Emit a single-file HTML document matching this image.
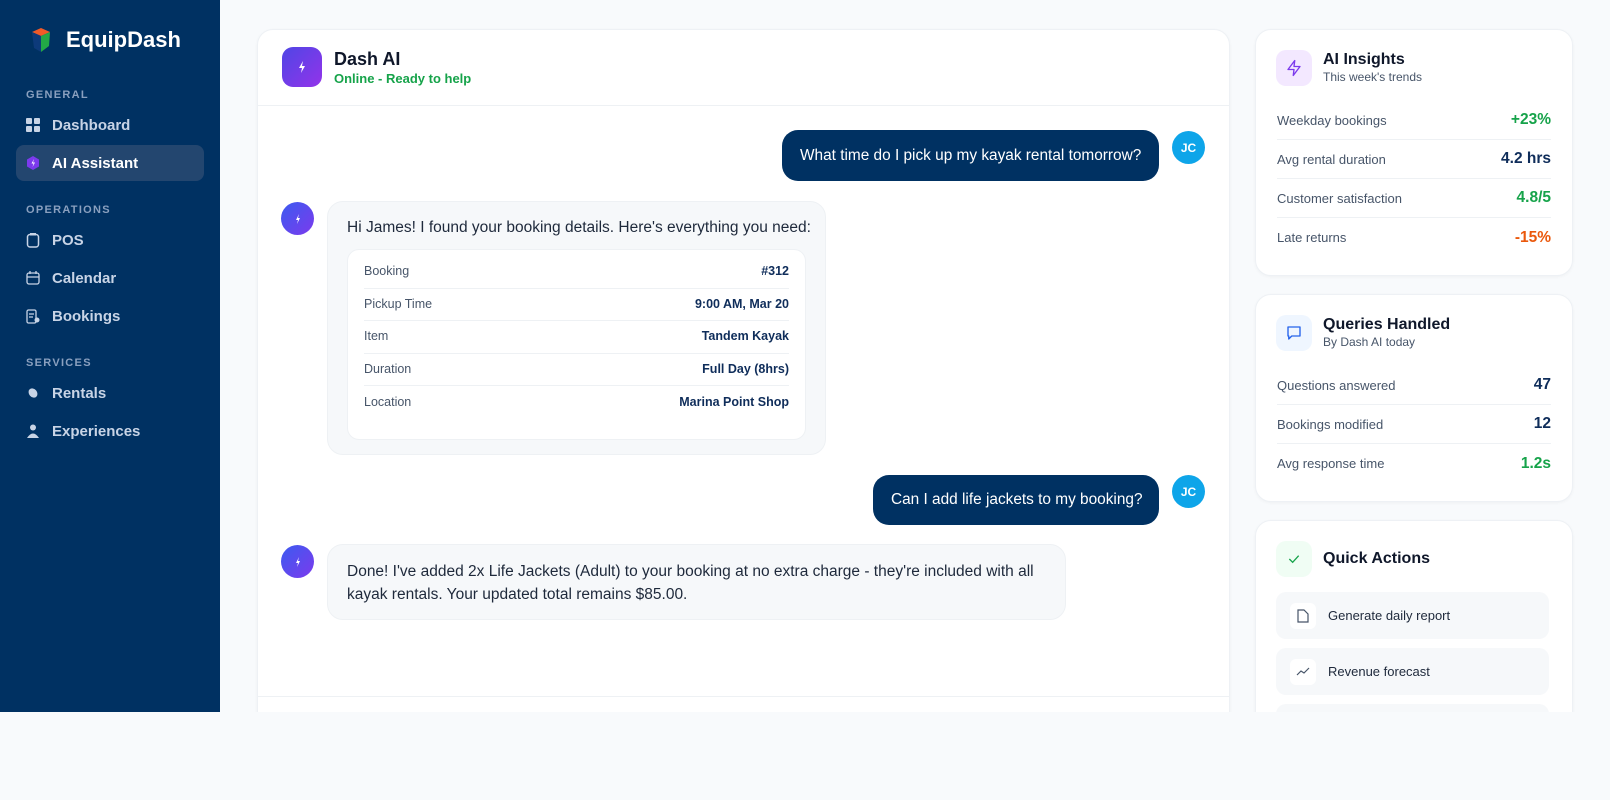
<!DOCTYPE html>
<html><head><meta charset="utf-8"><style>
*{box-sizing:border-box;margin:0;padding:0}
body{width:1610px;height:800px;background:#f8fafc;font-family:"Liberation Sans",sans-serif;position:relative;overflow:hidden;color:#0f172a}
.side{position:absolute;left:0;top:0;width:220px;height:712px;background:#003162}
.logo{position:absolute;left:30px;top:26px;display:flex;align-items:center;gap:14px;color:#fff;font-weight:700;font-size:22px}
.sec{position:absolute;left:26px;font-size:11px;letter-spacing:1.3px;color:#8aa0bf;font-weight:700}
.nav{position:absolute;left:16px;width:188px;height:36px;display:flex;align-items:center;padding-left:10px;gap:12px;color:#c8d4e6;font-size:15px;font-weight:600}
.nav.act{background:#23466f;color:#fff;border-radius:8px}
.ic{width:14px;height:14px;display:flex;align-items:center;justify-content:center}
.card{position:absolute;background:#fff;border-radius:16px;box-shadow:0 1px 3px rgba(0,0,0,.04);border:1px solid #eef1f5}
.av{position:absolute;border-radius:50%;background:linear-gradient(135deg,#3b5bf0,#7c3aed);display:flex;align-items:center;justify-content:center}
.jc{position:absolute;width:33px;height:33px;border-radius:50%;background:#0ea5e9;color:#fff;font-size:12px;font-weight:700;display:flex;align-items:center;justify-content:center}
.ub{position:absolute;background:#003162;color:#fff;font-size:15.4px;border-radius:16px;display:flex;align-items:center;padding:0 18px;white-space:nowrap}
.bb{position:absolute;background:#f6f8fa;border:1px solid #eef1f4;border-radius:16px;font-size:15.5px;color:#1e293b;line-height:23px}
.row{display:flex;justify-content:space-between;align-items:center;height:32.5px;border-bottom:1px solid #eef1f4;font-size:12.5px}
.row span:first-child{color:#475569}
.row span:last-child{color:#0f2d5a;font-weight:700}
.ins{display:flex;justify-content:space-between;align-items:center;height:39px;border-bottom:1px solid #eef1f4;font-size:13px;color:#475569}
.ins b{font-size:15.5px}
.hi{position:absolute;left:20px;width:36px;height:36px;border-radius:10px;display:flex;align-items:center;justify-content:center}
.ht{position:absolute;left:67px;font-weight:700;font-size:16px;color:#0f172a}
.hs{position:absolute;left:67px;font-size:12px;color:#475569}
.qa{position:absolute;left:20px;width:273px;height:47px;background:#f6f8fa;border-radius:10px;display:flex;align-items:center;padding-left:14px;gap:12px;font-size:13px;color:#1e293b}
.qa i{width:26px;height:26px;background:#fff;border-radius:6px;display:flex;align-items:center;justify-content:center}
</style></head><body>
<div class="side">
 <div class="logo"><svg width="22" height="28" viewBox="0 0 22 28"><path d="M2 6 L11 2 L20 6 L11 10Z" fill="#f05a28"/><path d="M2 6 L11 10 L11 26 L4 22Z" fill="#0d3a7a"/><path d="M11 10 L20 6 L19 20 L11 26Z" fill="#22a846"/></svg>EquipDash</div>
 <div class="sec" style="top:89px">GENERAL</div>
 <div class="nav" style="top:107px"><span class="ic"><svg width="14" height="14"><rect x="0" y="0" width="6" height="6" rx="1" fill="#c8d4e6"/><rect x="8" y="0" width="6" height="6" rx="1" fill="#c8d4e6"/><rect x="0" y="8" width="6" height="6" rx="1" fill="#c8d4e6"/><rect x="8" y="8" width="6" height="6" rx="1" fill="#c8d4e6"/></svg></span>Dashboard</div>
 <div class="nav act" style="top:145px"><span class="ic"><svg width="12" height="14"><path d="M6 0 L12 3.5 V10.5 L6 14 L0 10.5 V3.5Z" fill="#7c3aed"/><path d="M7 3 L4.5 7.5 H6.5 L5.5 11 L8 6.5 H6Z" fill="#fff"/></svg></span>AI Assistant</div>
 <div class="sec" style="top:204px">OPERATIONS</div>
 <div class="nav" style="top:222px"><span class="ic"><svg width="14" height="15"><rect x="1.5" y="1.5" width="11" height="12.5" rx="2.5" fill="none" stroke="#c8d4e6" stroke-width="1.5"/><rect x="4" y="0" width="6" height="2.5" fill="#c8d4e6"/></svg></span>POS</div>
 <div class="nav" style="top:260px"><span class="ic"><svg width="14" height="14"><rect x="1" y="2" width="12" height="11" rx="2" fill="none" stroke="#c8d4e6" stroke-width="1.3"/><path d="M1 6 H13 M4 0 V3 M10 0 V3" stroke="#c8d4e6" stroke-width="1.3"/></svg></span>Calendar</div>
 <div class="nav" style="top:298px"><span class="ic"><svg width="14" height="15"><rect x="1" y="1" width="9" height="13" rx="1.5" fill="none" stroke="#c8d4e6" stroke-width="1.3"/><path d="M3 5 H8 M3 8 H7" stroke="#c8d4e6" stroke-width="1.2"/><circle cx="11" cy="11" r="2.5" fill="#c8d4e6"/></svg></span>Bookings</div>
 <div class="sec" style="top:357px">SERVICES</div>
 <div class="nav" style="top:375px"><span class="ic"><svg width="14" height="14"><ellipse cx="7" cy="7" rx="4" ry="5" transform="rotate(-40 7 7)" fill="#c8d4e6"/></svg></span>Rentals</div>
 <div class="nav" style="top:413px"><span class="ic"><svg width="14" height="14"><circle cx="7" cy="3.5" r="3" fill="#c8d4e6"/><path d="M1 14 Q7 5 13 14Z" fill="#c8d4e6"/></svg></span>Experiences</div>
</div>

<div class="card" style="left:257px;top:29px;width:973px;height:700px;border-radius:16px">
 <div style="position:absolute;left:0;right:0;top:75px;border-top:1px solid #eef1f4"></div>
 <div style="position:absolute;left:0;right:0;top:666px;border-top:1px solid #eef1f4"></div>
 <div style="position:absolute;left:24px;top:17px;width:40px;height:40px;border-radius:11px;background:linear-gradient(135deg,#4f46e5,#9333ea);display:flex;align-items:center;justify-content:center"><svg width="8" height="12"><path d="M5 0 L1 7 H4 L3 12 L7 5 H4Z" fill="#fff"/></svg></div>
 <div style="position:absolute;left:76px;top:19px;font-size:18px;font-weight:700">Dash AI</div>
 <div style="position:absolute;left:76px;top:41px;font-size:13px;color:#16a34a;font-weight:600">Online - Ready to help</div>
</div>

<div class="ub" style="left:782px;top:130px;width:377px;height:51px">What time do I pick up my kayak rental tomorrow?</div>
<div class="jc" style="left:1172px;top:131px">JC</div>

<div class="av" style="left:281px;top:202px;width:33px;height:33px"><svg width="6" height="10"><path d="M4 0 L1 6 H3 L2 10 L5 4 H3Z" fill="#fff"/></svg></div>
<div class="bb" style="left:327px;top:201px;width:499px;height:254px;padding:14px 19px"><div style="white-space:nowrap">Hi James! I found your booking details. Here's everything you need:</div>
 <div style="margin-top:10px;background:#fff;border:1px solid #eef1f4;border-radius:12px;padding:6px 16px 10px;height:191px">
  <div class="row"><span>Booking</span><span>#312</span></div>
  <div class="row"><span>Pickup Time</span><span>9:00 AM, Mar 20</span></div>
  <div class="row"><span>Item</span><span>Tandem Kayak</span></div>
  <div class="row"><span>Duration</span><span>Full Day (8hrs)</span></div>
  <div class="row" style="border:none"><span>Location</span><span>Marina Point Shop</span></div>
 </div>
</div>

<div class="ub" style="left:873px;top:475px;width:286px;height:50px">Can I add life jackets to my booking?</div>
<div class="jc" style="left:1172px;top:475px">JC</div>

<div class="av" style="left:281px;top:545px;width:33px;height:33px"><svg width="6" height="10"><path d="M4 0 L1 6 H3 L2 10 L5 4 H3Z" fill="#fff"/></svg></div>
<div class="bb" style="left:327px;top:544px;width:739px;height:76px;padding:15px 19px">Done! I've added 2x Life Jackets (Adult) to your booking at no extra charge - they're included with all<br>kayak rentals. Your updated total remains $85.00.</div>

<div class="card" style="left:1255px;top:29px;width:318px;height:247px">
 <div class="hi" style="top:20px;background:#f3e8ff"><svg width="18" height="18" viewBox="0 0 24 24"><path d="M13 2 L4 14 H12 L11 22 L20 10 H12Z" fill="none" stroke="#7c3aed" stroke-width="1.8" stroke-linejoin="round"/></svg></div>
 <div class="ht" style="top:21px">AI Insights</div>
 <div class="hs" style="top:40px">This week's trends</div>
 <div style="position:absolute;left:21px;right:21px;top:71px">
  <div class="ins"><span>Weekday bookings</span><b style="color:#16a34a">+23%</b></div>
  <div class="ins"><span>Avg rental duration</span><b style="color:#0f2d5a">4.2 hrs</b></div>
  <div class="ins"><span>Customer satisfaction</span><b style="color:#16a34a">4.8/5</b></div>
  <div class="ins" style="border:none"><span>Late returns</span><b style="color:#ea580c">-15%</b></div>
 </div>
</div>

<div class="card" style="left:1255px;top:294px;width:318px;height:208px">
 <div class="hi" style="top:20px;background:#eff6ff"><svg width="18" height="18" viewBox="0 0 24 24"><path d="M4 4 H20 V16 H9 L5 20 V16 H4Z" fill="none" stroke="#2563eb" stroke-width="1.8" stroke-linejoin="round"/></svg></div>
 <div class="ht" style="top:21px">Queries Handled</div>
 <div class="hs" style="top:40px">By Dash AI today</div>
 <div style="position:absolute;left:21px;right:21px;top:71px">
  <div class="ins"><span>Questions answered</span><b style="color:#0f2d5a">47</b></div>
  <div class="ins"><span>Bookings modified</span><b style="color:#0f2d5a">12</b></div>
  <div class="ins" style="border:none"><span>Avg response time</span><b style="color:#16a34a">1.2s</b></div>
 </div>
</div>

<div class="card" style="left:1255px;top:520px;width:318px;height:260px">
 <div class="hi" style="top:20px;background:#f0fdf4"><svg width="16" height="16" viewBox="0 0 24 24"><path d="M5 12 L10 17 L19 7" fill="none" stroke="#16a34a" stroke-width="2"/></svg></div>
 <div class="ht" style="top:29px">Quick Actions</div>
 <div class="qa" style="top:71px"><i><svg width="12" height="14"><path d="M1 1 H7 L11 5 V13 H1Z" fill="none" stroke="#475569" stroke-width="1.2"/></svg></i>Generate daily report</div>
 <div class="qa" style="top:127px"><i><svg width="14" height="10"><path d="M1 8 L5 4 L8 6 L13 1" fill="none" stroke="#475569" stroke-width="1.2"/></svg></i>Revenue forecast</div>
 <div class="qa" style="top:183px"></div>
</div>
<div style="position:absolute;left:0;top:712px;width:1610px;height:88px;background:#f8fafc"></div>
</body></html>
